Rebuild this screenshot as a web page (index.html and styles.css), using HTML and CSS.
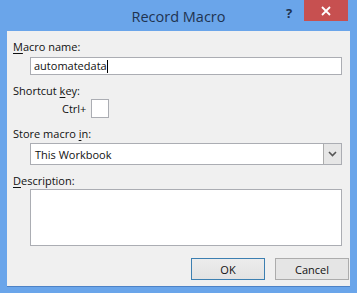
FILE: index.html
```html
<!DOCTYPE html>
<html>
	<head>
		<meta charset="UTF-8">
		<title>Record Macro</title>
		<link rel="stylesheet" href="styles.css">
	</head>
	<body>
		<div class="window">
			<div class="titlebar">
				<span class="title">Record Macro</span>
				<span class="help">?</span>
				<span class="close">
					<svg width="10" height="10" viewBox="0 0 10 10">
						<path d="M1 1 L9 9 M9 1 L1 9" stroke="#fff" stroke-width="1.8"/>
					</svg>
				</span>
			</div>

			<div class="client">
				<div class="label"><u>M</u>acro name:</div>
				<div class="field name">automatedata<span class="caret"></span></div>

				<div class="label label-gap">Shortcut <u>k</u>ey:</div>
				<div class="shortcut">
					<span class="ctrl">Ctrl+</span>
					<span class="keybox"></span>
				</div>

				<div class="label label-gap">Store macro <u>i</u>n:</div>
				<div class="field select">
					<span class="value">This Workbook</span>
					<span class="drop">
						<svg width="9" height="6" viewBox="0 0 9 6">
							<path d="M1 1 L4.5 4.5 L8 1" fill="none" stroke="#555" stroke-width="1.6"/>
						</svg>
					</span>
				</div>

				<div class="label label-gap"><u>D</u>escription:</div>
				<div class="field desc"></div>

				<div class="buttons">
					<span class="button default">OK</span>
					<span class="button">Cancel</span>
				</div>
			</div>
		</div>
	</body>
</html>
```

FILE: styles.css
```css
html {
	box-sizing: border-box;
	font-family: "Open Sans", "Noto Sans", Arial, sans-serif;
}
*, *:before, *:after {
	box-sizing: inherit;
}

body {
	margin: 0;
	background: #6aa5ea;
}

.window {
	width: 357px;
	height: 293px;
	display: flex;
	flex-direction: column;
	background: #6aa5ea;
}

/* title bar */
.titlebar {
	position: relative;
	height: 31px;
	display: flex;
	justify-content: center;
	align-items: center;
}

.title {
	font-size: 14.5px;
	color: #1f3350;
	padding-top: 1px;
}

.help {
	position: absolute;
	left: 286px;
	top: 4px;
	font-size: 13px;
	font-weight: bold;
	color: #1f3350;
}

.close {
	position: absolute;
	left: 304px;
	top: 0;
	width: 44px;
	height: 21px;
	background: #c75050;
	display: flex;
	justify-content: center;
	align-items: center;
}

/* client area */
.client {
	margin: 0 7px;
	height: 256px;
	background: #f0f0f0;
	border-bottom: 1px solid #4d82c6;
	padding: 8px 0 0 6px;
	display: flex;
	flex-direction: column;
	font-size: 11px;
	color: #111;
}

.label {
	height: 16px;
	line-height: 16px;
}

.label u {
	text-decoration-thickness: 1px;
	text-underline-offset: 2px;
}

.label-gap {
	margin-top: 8px;
}

.field {
	margin-left: 17px;
	width: 312px;
	background: #fff;
	border: 1px solid #abadb3;
}

.name {
	margin-top: 2px;
	height: 18px;
	line-height: 16px;
	padding-left: 3px;
	display: flex;
	align-items: center;
}

.caret {
	display: inline-block;
	width: 1px;
	height: 13px;
	background: #000;
}

.shortcut {
	height: 19px;
	display: flex;
	align-items: center;
	padding-left: 49px;
}

.ctrl {
	margin-right: 5px;
}

.keybox {
	width: 18px;
	height: 19px;
	background: #fff;
	border: 1px solid #abadb3;
}

.select {
	margin-top: 1px;
	height: 22px;
	display: flex;
	align-items: center;
	justify-content: space-between;
}

.select .value {
	padding-left: 4px;
}

.drop {
	width: 18px;
	height: 20px;
	background: #e6e6e6;
	border-left: 1px solid #acacac;
	display: flex;
	justify-content: center;
	align-items: center;
}

.desc {
	height: 57px;
}

.buttons {
	margin-top: 12px;
	display: flex;
	justify-content: flex-end;
	gap: 10px;
	padding-right: 1px;
}

.button {
	width: 74px;
	height: 22px;
	border: 1px solid #acacac;
	background: #e5e5e5;
	display: flex;
	justify-content: center;
	align-items: center;
}

.button.default {
	border-color: #3c7fb1;
	background: linear-gradient(#ececec, #e2e2e2);
}
```
